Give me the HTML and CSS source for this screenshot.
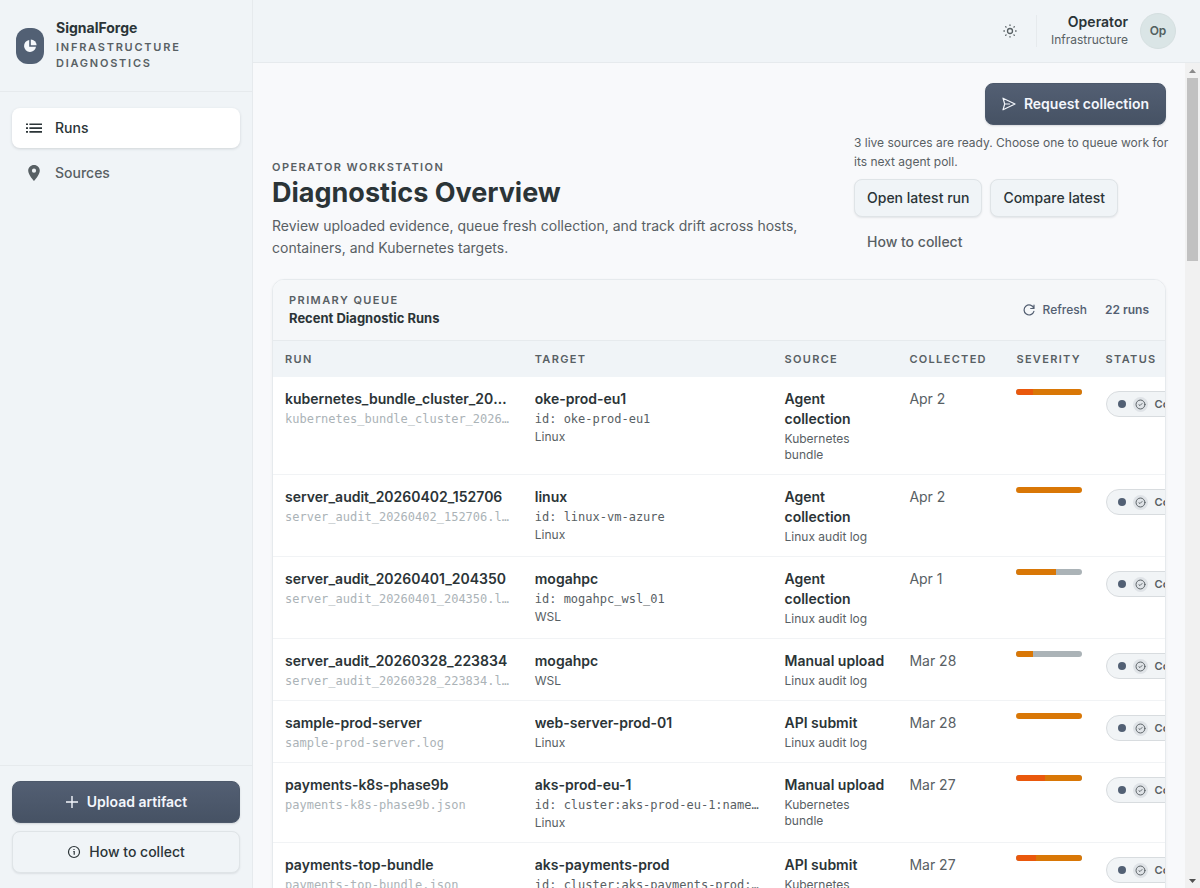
FILE: index.html
```html
<!DOCTYPE html>
<html lang="en">
<head>
<meta charset="utf-8">
<title>SignalForge – Diagnostics Overview</title>
<meta name="viewport" content="width=device-width, initial-scale=1">
<link rel="stylesheet" href="styles.css">
</head>
<body>
<svg width="0" height="0" class="defs" aria-hidden="true">
  <symbol id="check-badge" viewBox="0 0 16 16"><g fill="none" stroke="currentColor" stroke-width="1.400" stroke-linecap="round" stroke-linejoin="round"><circle cx="8" cy="8" r="6.5"/><path d="M5.8 8.500 7.300 9.500 10.200 6.600"/></g></symbol>
</svg>
<div class="app">
  <aside class="sidebar">
    <div class="brand">
      <span class="brand-mark"><svg width="14" height="14" viewBox="0 0 14 14" fill="currentColor" aria-hidden="true"><path d="M6.2 1A6 6 0 1 0 13 7.8H6.2z"/><path d="M7.8 .4V6.2h5.8A6 6 0 0 0 7.8 .4z"/></svg></span>
      <div>
        <div class="brand-name">SignalForge</div>
        <div class="eyebrow wide">Infrastructure Diagnostics</div>
      </div>
    </div>
    <nav class="nav">
      <a class="nav-item active" href="#runs"><svg width="16" height="16" viewBox="0 0 16 16" fill="currentColor" aria-hidden="true"><path d="M0 3.4h2v1.7H0zM3.4 3.4H16v1.7H3.4zM0 7.2h2v1.7H0zM3.4 7.2H16v1.7H3.4zM0 11h2v1.7H0zM3.4 11H16v1.7H3.4z"/></svg>Runs</a>
      <a class="nav-item" href="#sources"><svg width="16" height="16" viewBox="0 0 16 16" fill="currentColor" aria-hidden="true"><path fill-rule="evenodd" d="M8 0C4.700 0 2.200 2.500 2.200 5.700 2.200 9.700 8 16 8 16s5.800-6.300 5.800-10.300C13.800 2.500 11.300 0 8 0zm0 7.800a2.100 2.100 0 1 1 0-4.200 2.100 2.100 0 0 1 0 4.200z"/></svg>Sources</a>
    </nav>
    <div class="sidebar-foot">
      <button class="btn primary" type="button"><svg width="14" height="14" viewBox="0 0 14 14" fill="none" stroke="currentColor" stroke-width="1.4" aria-hidden="true"><path d="M7 1v12M1 7h12"/></svg>Upload artifact</button>
      <button class="btn secondary tall" type="button"><svg width="14" height="14" viewBox="0 0 14 14" fill="none" stroke="currentColor" stroke-width="1.200" aria-hidden="true"><circle cx="7" cy="7" r="5.500"/><path d="M6.300 6.500H7.200V9.800M7 4v1"/></svg>How to collect</button>
    </div>
  </aside>
  <div class="workspace">
    <header class="topbar">
      <button class="icon-btn" type="button" aria-label="Toggle theme"><svg width="14" height="14" viewBox="0 0 14 14" fill="none" stroke="currentColor" stroke-width="1.300" stroke-linecap="round" aria-hidden="true"><circle cx="7" cy="7" r="2.500"/><path d="M7 .9v.5M7 12.600v.5M.9 7h.5M12.600 7h.5M2.700 2.700l.4 .4M10.900 10.900l.4 .4M2.700 11.300l.4-.4M10.900 3.100l.4-.4"/></svg></button>
      <div class="user">
        <div class="user-text">
          <div class="user-name">Operator</div>
          <div class="user-role">Infrastructure</div>
        </div>
        <span class="avatar">Op</span>
      </div>
    </header>
    <div class="viewport">
    <main class="main">
      <section class="hero">
        <div class="hero-copy">
          <div class="eyebrow">Operator Workstation</div>
          <h1>Diagnostics Overview</h1>
          <p>Review uploaded evidence, queue fresh collection, and track drift across hosts, containers, and Kubernetes targets.</p>
        </div>
        <div class="hero-actions">
          <button class="btn primary request" type="button"><svg width="14" height="14" viewBox="0 0 14 14" fill="none" stroke="currentColor" stroke-width="1.200" stroke-linejoin="round" stroke-linecap="round" aria-hidden="true"><path d="M1 1.200 13 7 1 12.800 2.700 7zM2.700 7H7.500"/></svg>Request collection</button>
          <p class="hint">3 live sources are ready. Choose one to queue work for its next agent poll.</p>
          <div class="action-row">
            <button class="btn secondary" type="button">Open latest run</button>
            <button class="btn secondary" type="button">Compare latest</button>
            <button class="btn ghost" type="button">How to collect</button>
          </div>
        </div>
      </section>
      <section class="card">
        <header class="card-head">
          <div>
            <div class="eyebrow">Primary Queue</div>
            <h2>Recent Diagnostic Runs</h2>
          </div>
          <div class="card-tools">
            <button class="refresh" type="button"><svg width="12" height="12" viewBox="0 0 12 12" fill="none" stroke="currentColor" stroke-width="1.200" stroke-linecap="round" stroke-linejoin="round" aria-hidden="true"><path d="M11 1.200V4.500H7.700M10.800 4.300A5 5 0 1 0 10.900 7.300"/></svg>Refresh</button>
            <span>22 runs</span>
          </div>
        </header>
        <table class="runs">
          <colgroup><col class="c-run"><col class="c-target"><col class="c-source"><col class="c-date"><col class="c-sev"><col class="c-status"></colgroup>
          <thead><tr><th scope="col">Run</th><th scope="col">Target</th><th scope="col">Source</th><th scope="col">Collected</th><th scope="col">Severity</th><th scope="col">Status</th></tr></thead>
          <tbody>
            <tr>
              <td><div class="name">kubernetes_bundle_cluster_20260402</div><div class="mono faint">kubernetes_bundle_cluster_20260402.tar</div></td>
              <td><div class="name">oke-prod-eu1</div><div class="mono">id: oke-prod-eu1</div><div class="sub">Linux</div></td>
              <td><div class="source">Agent collection</div><div class="sub">Kubernetes bundle</div></td>
              <td class="date">Apr 2</td>
              <td><div class="bar"><i class="high" style="width:26%"></i><i class="medium" style="width:74%"></i></div></td>
              <td><span class="pill"><i class="dot"></i><i class="badge"><svg width="11" height="11"><use href="#check-badge"/></svg></i>Complete</span></td>
            </tr>
            <tr>
              <td><div class="name">server_audit_20260402_152706</div><div class="mono faint">server_audit_20260402_152706.log.gz</div></td>
              <td><div class="name">linux</div><div class="mono">id: linux-vm-azure</div><div class="sub">Linux</div></td>
              <td><div class="source">Agent collection</div><div class="sub">Linux audit log</div></td>
              <td class="date">Apr 2</td>
              <td><div class="bar"><i class="medium" style="width:100%"></i></div></td>
              <td><span class="pill"><i class="dot"></i><i class="badge"><svg width="11" height="11"><use href="#check-badge"/></svg></i>Complete</span></td>
            </tr>
            <tr>
              <td><div class="name">server_audit_20260401_204350</div><div class="mono faint">server_audit_20260401_204350.log.gz</div></td>
              <td><div class="name">mogahpc</div><div class="mono">id: mogahpc_wsl_01</div><div class="sub">WSL</div></td>
              <td><div class="source">Agent collection</div><div class="sub">Linux audit log</div></td>
              <td class="date">Apr 1</td>
              <td><div class="bar"><i class="medium" style="width:61%"></i></div></td>
              <td><span class="pill"><i class="dot"></i><i class="badge"><svg width="11" height="11"><use href="#check-badge"/></svg></i>Complete</span></td>
            </tr>
            <tr>
              <td><div class="name">server_audit_20260328_223834</div><div class="mono faint">server_audit_20260328_223834.log.gz</div></td>
              <td><div class="name">mogahpc</div><div class="sub">WSL</div></td>
              <td><div class="source">Manual upload</div><div class="sub">Linux audit log</div></td>
              <td class="date">Mar 28</td>
              <td><div class="bar"><i class="medium" style="width:25%"></i></div></td>
              <td><span class="pill"><i class="dot"></i><i class="badge"><svg width="11" height="11"><use href="#check-badge"/></svg></i>Complete</span></td>
            </tr>
            <tr>
              <td><div class="name">sample-prod-server</div><div class="mono faint">sample-prod-server.log</div></td>
              <td><div class="name">web-server-prod-01</div><div class="sub">Linux</div></td>
              <td><div class="source">API submit</div><div class="sub">Linux audit log</div></td>
              <td class="date">Mar 28</td>
              <td><div class="bar"><i class="medium" style="width:100%"></i></div></td>
              <td><span class="pill"><i class="dot"></i><i class="badge"><svg width="11" height="11"><use href="#check-badge"/></svg></i>Complete</span></td>
            </tr>
            <tr>
              <td><div class="name">payments-k8s-phase9b</div><div class="mono faint">payments-k8s-phase9b.json</div></td>
              <td><div class="name">aks-prod-eu-1</div><div class="mono">id: cluster:aks-prod-eu-1:namespace</div><div class="sub">Linux</div></td>
              <td><div class="source">Manual upload</div><div class="sub">Kubernetes bundle</div></td>
              <td class="date">Mar 27</td>
              <td><div class="bar"><i class="high" style="width:44%"></i><i class="medium" style="width:56%"></i></div></td>
              <td><span class="pill"><i class="dot"></i><i class="badge"><svg width="11" height="11"><use href="#check-badge"/></svg></i>Complete</span></td>
            </tr>
            <tr>
              <td><div class="name">payments-top-bundle</div><div class="mono faint">payments-top-bundle.json</div></td>
              <td><div class="name">aks-payments-prod</div><div class="mono">id: cluster:aks-payments-prod:namespace</div><div class="sub">Linux</div></td>
              <td><div class="source">API submit</div><div class="sub">Kubernetes bundle</div></td>
              <td class="date">Mar 27</td>
              <td><div class="bar"><i class="high" style="width:30%"></i><i class="medium" style="width:70%"></i></div></td>
              <td><span class="pill"><i class="dot"></i><i class="badge"><svg width="11" height="11"><use href="#check-badge"/></svg></i>Complete</span></td>
            </tr>
          </tbody>
        </table>
      </section>
    </main>
    <div class="scrollbar" aria-hidden="true">
      <svg width="15" height="15" viewBox="0 0 15 15"><path d="M4 10 7.500 6 11 10z" fill="#8a8a8a"/></svg>
      <div class="track"><div class="thumb"></div></div>
      <svg width="15" height="15" viewBox="0 0 15 15"><path d="M4 6 7.500 10 11 6z" fill="#505050"/></svg>
    </div>
    </div>
  </div>
</div>
</body>
</html>
```
FILE: styles.css
```css
* { box-sizing: border-box; }

:root {
  --ink: #2b3437;
  --muted: #586064;
  --faint: #abb3b7;
  --slate: #526074;
  --rail: #f0f4f7;
  --page: #f8f9fb;
  --line: #e6eaed;
}

body {
  margin: 0;
  height: 100vh;
  overflow: hidden;
  font: 14px/20px Inter, "Liberation Sans", sans-serif;
  color: var(--ink);
  background: var(--page);
}

button { font: inherit; color: inherit; cursor: pointer; }
p, h1, h2 { margin: 0; }
svg { flex: none; }
.defs { position: absolute; }

.app { display: flex; height: 100%; }

.sidebar {
  display: flex;
  flex-direction: column;
  flex: none;
  width: 253px;
  background: var(--rail);
  border-right: 1px solid var(--line);
}

.brand {
  display: flex;
  align-items: center;
  gap: 12px;
  padding: 20px 16px;
  border-bottom: 1px solid var(--line);
}

.brand-mark {
  display: grid;
  place-items: center;
  flex: none;
  width: 28px;
  height: 36px;
  border-radius: 12px;
  background: var(--slate);
  color: #f5f8fc;
}

.brand-name { font-size: 14px; line-height: 16px; font-weight: 700; margin-bottom: 3px; }

.eyebrow {
  font-size: 11px;
  line-height: 16px;
  font-weight: 600;
  letter-spacing: 0.13em;
  text-transform: uppercase;
  color: var(--muted);
}

.eyebrow.wide { letter-spacing: 0.16em; }

.nav { display: flex; flex-direction: column; gap: 5px; padding: 16px 12px; }

.nav-item {
  display: flex;
  align-items: center;
  gap: 13px;
  height: 40px;
  padding: 0 14px;
  border-radius: 8px;
  font-weight: 500;
  text-decoration: none;
  color: var(--muted);
}

.nav-item.active { background: #fff; color: var(--ink); box-shadow: 0 1px 3px rgba(43, 52, 55, 0.16); }

.sidebar-foot {
  display: flex;
  flex-direction: column;
  gap: 8px;
  margin-top: auto;
  padding: 15px 12px;
  border-top: 1px solid var(--line);
}

.btn {
  display: inline-flex;
  align-items: center;
  justify-content: center;
  gap: 8px;
  height: 38px;
  padding: 0 12px;
  border: 1px solid transparent;
  border-radius: 8px;
  font-weight: 500;
  white-space: nowrap;
  background: none;
}

.btn.primary {
  height: 42px;
  font-weight: 600;
  color: #f3f6fc;
  border-color: #4d596b;
  background: linear-gradient(#535f73, #465264);
  box-shadow: 0 1px 2px rgba(43, 52, 55, 0.16);
}

.btn.secondary {
  background: var(--rail);
  border-color: #dfe4e7;
  box-shadow: 0 1px 2px rgba(43, 52, 55, 0.1);
}

.btn.tall { height: 42px; }
.btn.ghost { height: 34px; color: var(--muted); }

.workspace { display: flex; flex-direction: column; flex: 1; min-width: 0; }

.topbar {
  display: flex;
  align-items: center;
  justify-content: flex-end;
  gap: 12px;
  flex: none;
  height: 63px;
  padding: 0 24px;
  background: var(--rail);
  border-bottom: 1px solid var(--line);
}

.icon-btn {
  display: grid;
  place-items: center;
  width: 28px;
  height: 28px;
  padding: 0;
  border: 0;
  background: none;
  color: var(--muted);
}

.user { display: flex; align-items: center; gap: 12px; padding-left: 14px; border-left: 1px solid var(--line); height: 32px; }
.user-text { text-align: right; }
.user-name { line-height: 18px; font-weight: 600; }
.user-role { font-size: 12px; line-height: 18px; color: var(--muted); }

.avatar {
  display: grid;
  place-items: center;
  width: 36px;
  height: 36px;
  border: 1px solid #d5dfe0;
  border-radius: 50%;
  background: #dae5e6;
  font-size: 12px;
  font-weight: 600;
  color: #52605f;
}

.viewport { display: flex; flex: 1; min-height: 0; }
.main { flex: 1; min-width: 0; padding: 20px 19px; overflow-y: auto; scrollbar-width: none; }

.scrollbar { display: flex; flex-direction: column; flex: none; width: 15px; background: #f1f1f1; }
.track { flex: 1; padding: 0 2px; }
.thumb { height: 23%; background: #c1c1c1; }

.hero {
  display: flex;
  align-items: flex-end;
  justify-content: space-between;
  gap: 24px;
  margin-bottom: 20px;
}

.hero-copy { max-width: 540px; }
.hero-copy h1 { margin-bottom: 4px; font-size: 27px; line-height: 36px; font-weight: 700; }
.hero-copy p { line-height: 22px; color: var(--muted); }

.hero-actions { display: flex; flex-direction: column; gap: 8px; width: 312px; }
.request { align-self: flex-end; padding: 0 16px; }
.hint { margin-right: -4px; font-size: 12px; line-height: 19px; color: var(--muted); }
.action-row { display: flex; flex-wrap: wrap; gap: 8px; }

.card {
  overflow: hidden;
  border: 1px solid var(--line);
  border-radius: 12px;
  background: #fff;
  box-shadow: 0 1px 3px rgba(43, 52, 55, 0.06);
}

.card-head {
  display: flex;
  align-items: center;
  justify-content: space-between;
  padding: 12px 16px;
  background: #f5f7f9;
  border-bottom: 1px solid var(--line);
}

.card-head h2 { font-size: 13px; line-height: 20px; font-weight: 700; }
.card-tools { display: flex; align-items: center; gap: 18px; font-size: 12px; font-weight: 600; color: #535f72; }

.refresh {
  display: inline-flex;
  align-items: center;
  gap: 8px;
  padding: 0;
  border: 0;
  background: none;
  font-weight: 500;
}

.runs { width: 100%; table-layout: fixed; border-collapse: separate; border-spacing: 0; }
.c-run, .c-target { width: 28%; }
.c-source { width: 14%; }
.c-date { width: 12%; }
.c-sev { width: 10%; }
.c-status { width: 8%; }

.runs th {
  padding: 10px 12px;
  text-align: left;
  font-size: 11px;
  line-height: 16px;
  font-weight: 600;
  letter-spacing: 0.12em;
  text-transform: uppercase;
  white-space: nowrap;
  color: var(--muted);
  background: var(--rail);
}

.runs td { padding: 12px 12px 11px; vertical-align: top; border-bottom: 1px solid #f1f3f5; }

.name, .mono { overflow: hidden; text-overflow: ellipsis; white-space: nowrap; }
.name, .source { font-weight: 600; }
.mono { margin-top: 2px; font: 12px/16px "DejaVu Sans Mono", "Liberation Mono", monospace; color: var(--muted); }
.mono.faint { color: var(--faint); }
.sub { margin-top: 2px; font-size: 12px; line-height: 16px; color: var(--muted); }
.runs .date { color: var(--muted); }

.bar { display: flex; height: 6px; border-radius: 3px; overflow: hidden; background: #abb3b7; }
.high { background: #ea580c; }
.medium { background: #d97706; }

.pill {
  display: inline-flex;
  align-items: center;
  gap: 7px;
  height: 26px;
  margin-top: 2px;
  padding: 0 11px;
  border: 1px solid #d8dcdf;
  border-radius: 13px;
  background: #f1f4f6;
  font-size: 11px;
  font-weight: 600;
  color: var(--muted);
}

.dot { width: 8px; height: 8px; border-radius: 50%; background: var(--slate); }
.badge { display: grid; place-items: center; width: 15px; height: 15px; border-radius: 50%; background: #dfe3e7; }
```
